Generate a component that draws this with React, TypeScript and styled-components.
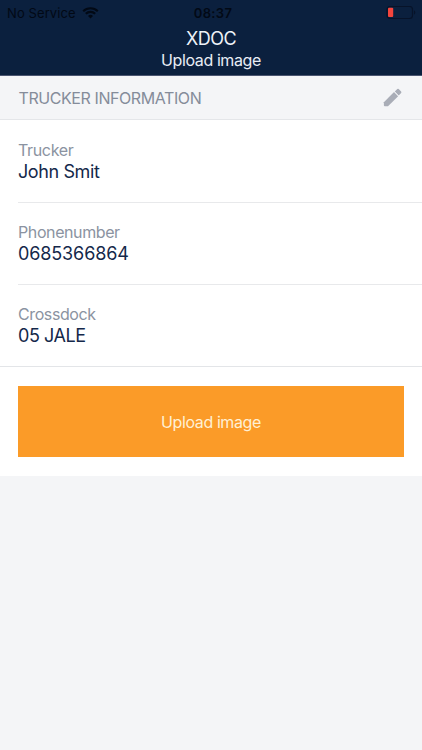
import React from "react";
import styled, { createGlobalStyle } from "styled-components";

const GlobalStyle = createGlobalStyle`
  * { box-sizing: border-box; }
  body { margin: 0; background: #f4f5f7; }
`;

const Screen = styled.div`
  min-height: 750px;
  background: #f4f5f7;
  font-family: Inter, Roboto, sans-serif;
  color: #14284a;
`;

const Header = styled.header`
  height: 76px;
  background: #0b203e;
  border-bottom: 1px solid #4a5570;
`;

const StatusBar = styled.div`
  height: 26px;
  padding: 0 6px 0 7px;
  display: grid;
  grid-template-columns: 1fr auto 1fr;
  align-items: center;
  font-size: 13px;
  line-height: 26px;
  color: #020915;
`;

const Carrier = styled.div`
  display: flex;
  align-items: center;
  gap: 6px;
`;

const Clock = styled.div`
  font-weight: 600;
  letter-spacing: 0.35px;
  padding-left: 3px;
`;

const BatterySlot = styled.div`
  display: flex;
  justify-content: flex-end;
`;

const Line = styled.span<{ $spacing?: number }>`
  display: inline-block;
  white-space: nowrap;
  letter-spacing: ${(p) => p.$spacing ?? 0}px;
`;

const Title = styled.h1`
  margin: 0;
  font-size: 18px;
  font-weight: 400;
  line-height: 25px;
  text-align: center;
  color: #eef2f8;
`;

const Subtitle = styled.div`
  font-size: 16px;
  line-height: 19px;
  text-align: center;
  color: #e8edf5;
`;

const SectionBar = styled.div`
  height: 44px;
  padding: 0 18px 0 18.5px;
  display: flex;
  align-items: center;
  justify-content: space-between;
  background: #f4f5f7;
  border-bottom: 1px solid #e4e6e9;
`;

const SectionTitle = styled.h2`
  margin: 0;
  padding-top: 1px;
  font-size: 16px;
  font-weight: 400;
  color: #858c9a;
`;

const Panel = styled.main`
  background: #fff;
`;

const Fields = styled.dl`
  margin: 0;
  padding-left: 18px;
  border-bottom: 1px solid #e3e5e8;
`;

const Field = styled.div`
  height: 82px;
  padding-top: 19px;
  border-bottom: 1px solid #e8e9eb;
  &:first-child {
    height: 83px;
    padding-top: 20px;
  }
  &:last-child {
    height: 81px;
    border-bottom: 0;
  }
`;

const Label = styled.dt`
  font-size: 16px;
  line-height: 20px;
  color: #8b93a1;
`;

const Value = styled.dd`
  margin: 0;
  font-size: 18px;
  line-height: 23px;
`;

const Actions = styled.div`
  padding: 19px 18px;
`;

const UploadButton = styled.button`
  display: block;
  width: 100%;
  height: 71px;
  padding: 1px 0 0;
  border: 0;
  background: #fb9b28;
  color: #fff0d4;
  font-family: inherit;
  font-size: 16px;
`;

const Wifi = () => (
  <svg width="17" height="12" viewBox="0 0 17 12" fill="none" stroke="#020915" strokeWidth="2.1">
    <path d="M1.2 4.2a10.4 10.4 0 0 1 14.6 0" />
    <path d="M3.8 6.8a6.7 6.7 0 0 1 9.4 0" />
    <path d="M8.5 11.5 6 9a3.5 3.5 0 0 1 5 0Z" fill="#020915" stroke="none" />
  </svg>
);

const Battery = () => (
  <svg width="30" height="14" viewBox="0 0 30 14">
    <rect x="1" y="0.5" width="25.5" height="12" rx="3" fill="none" stroke="#071329" strokeWidth="1.2" />
    <rect x="2" y="1.7" width="5.2" height="9.4" rx="1" fill="#f4453d" />
    <path d="M28 4.3v4.4c1.8-.7 1.8-3.7 0-4.4Z" fill="#071329" />
  </svg>
);

const Pencil = () => (
  <svg width="23" height="23" viewBox="0 0 24 24" fill="#a9adb7">
    <path d="M3 16.9V20.200a1 1 0 0 0 1 1H7.300L17.900 10.600l-4.300-4.300L3 16.900z" />
    <path d="M21 7.200c.4-.4.4-1.100 0-1.500l-2.500-2.500a1.050 1.050 0 0 0-1.500 0l-2.600 2.600 4 4 2.600-2.600z" />
    <path d="m13.900 5.900 4.400 4.400" stroke="#f4f5f7" strokeWidth="0.6" />
  </svg>
);

const fields = [
  { label: "Trucker", value: "John Smit", labelSpacing: -0.35, valueSpacing: -0.4 },
  { label: "Phonenumber", value: "0685366864", labelSpacing: -0.4, valueSpacing: -0.12 },
  { label: "Crossdock", value: "05 JALE", labelSpacing: -0.4, valueSpacing: -0.45 },
];

export default function App() {
  return (
    <Screen>
      <GlobalStyle />
      <Header>
        <StatusBar>
          <Carrier>
            <Line $spacing={0.1}>No Service</Line>
            <Wifi />
          </Carrier>
          <Clock>08:37</Clock>
          <BatterySlot>
            <Battery />
          </BatterySlot>
        </StatusBar>
        <Title><Line $spacing={-0.55}>XDOC</Line></Title>
        <Subtitle><Line $spacing={-0.4}>Upload image</Line></Subtitle>
      </Header>
      <SectionBar>
        <SectionTitle><Line $spacing={-0.42}>TRUCKER INFORMATION</Line></SectionTitle>
        <Pencil />
      </SectionBar>
      <Panel>
        <Fields>
          {fields.map((f) => (
            <Field key={f.label}>
              <Label><Line $spacing={f.labelSpacing}>{f.label}</Line></Label>
              <Value><Line $spacing={f.valueSpacing}>{f.value}</Line></Value>
            </Field>
          ))}
        </Fields>
        <Actions>
          <UploadButton><Line $spacing={-0.4}>Upload image</Line></UploadButton>
        </Actions>
      </Panel>
    </Screen>
  );
}
